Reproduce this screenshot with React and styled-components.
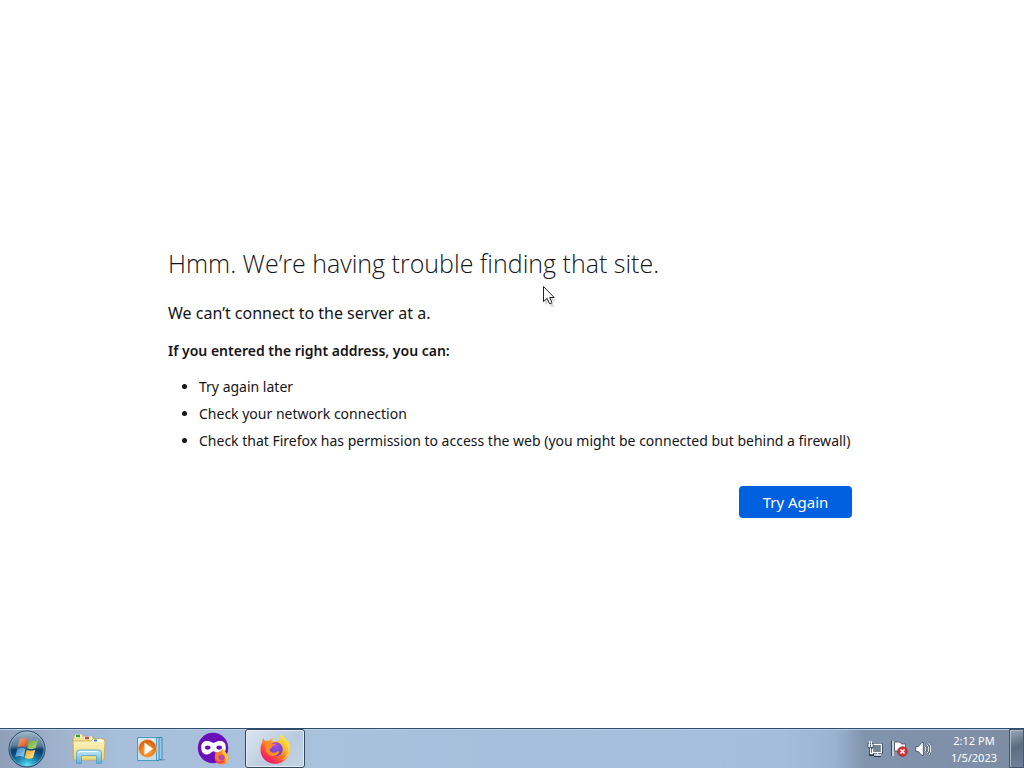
import React from 'react'
import styled, { createGlobalStyle } from 'styled-components'

const App = () => (
  <Desktop>
    <GlobalStyle />
    <Page>
      <Message>
        <Title>Hmm. We’re having trouble finding that site.</Title>
        <Lead>We can’t connect to the server at a.</Lead>
        <Hint>If you entered the right address, you can:</Hint>
        <Tips>
          <li>Try again later</li>
          <li>Check your network connection</li>
          <li>Check that Firefox has permission to access the web (you might be connected but behind a firewall)</li>
        </Tips>
        <Actions>
          <PrimaryButton type="button">Try Again</PrimaryButton>
        </Actions>
      </Message>
    </Page>
    <Taskbar>
      <StartButton type="button" aria-label="Start"><StartIcon /></StartButton>
      <Tasks>
        <TaskButton type="button" aria-label="File Explorer"><ExplorerIcon /></TaskButton>
        <TaskButton type="button" aria-label="Media Player"><PlayerIcon /></TaskButton>
        <TaskButton type="button" aria-label="Firefox Private Browsing"><PrivateIcon /></TaskButton>
        <TaskButton type="button" aria-label="Firefox" $active><FirefoxIcon /></TaskButton>
      </Tasks>
      <Tray>
        <TrayButton type="button" aria-label="Network"><NetworkIcon /></TrayButton>
        <TrayButton type="button" aria-label="Action Center"><FlagIcon /></TrayButton>
        <TrayButton type="button" aria-label="Volume"><VolumeIcon /></TrayButton>
        <Clock>
          <span>2:12 PM</span>
          <span>1/5/2023</span>
        </Clock>
        <ShowDesktop type="button" aria-label="Show desktop" />
      </Tray>
    </Taskbar>
    <Pointer viewBox="0 0 14 22" width="14" height="22" aria-hidden="true">
      <path d="M3 4v16l4-3 2 5h3l-2-6h4z" fill="#000" opacity=".15" />
      <path d="M1.5 1.5v15.2l3.6-3.4 2.5 5.5 2.4-1.1-2.4-5.2h4.6z" fill="#fff" stroke="#222" strokeLinejoin="round" />
    </Pointer>
  </Desktop>
)

export default App

const StartIcon = () => (
  <svg width="38" height="38" viewBox="0 0 38 38">
    <defs>
      <linearGradient id="orb" x1="0" y1="0" x2="0" y2="1">
        <stop offset="0" stopColor="#a3b4c4" />
        <stop offset=".4" stopColor="#5f7f9b" />
        <stop offset=".52" stopColor="#0d3d69" />
        <stop offset="1" stopColor="#0a6ea0" />
      </linearGradient>
      <radialGradient id="orbGlow" cx=".5" cy="1" r=".55">
        <stop offset="0" stopColor="#5ff0fa" />
        <stop offset="1" stopColor="#1a8cc0" stopOpacity="0" />
      </radialGradient>
      <linearGradient id="paneRed" x1="0" y1="0" x2="1" y2="1">
        <stop offset="0" stopColor="#f8b27a" />
        <stop offset="1" stopColor="#d83c18" />
      </linearGradient>
      <linearGradient id="paneGreen" x1="0" y1="0" x2="1" y2="1">
        <stop offset="0" stopColor="#6fab3c" />
        <stop offset="1" stopColor="#b4d67c" />
      </linearGradient>
      <linearGradient id="paneBlue" x1="0" y1="0" x2="1" y2="1">
        <stop offset="0" stopColor="#2d7ec4" />
        <stop offset="1" stopColor="#9cd4f2" />
      </linearGradient>
      <linearGradient id="paneYellow" x1="0" y1="0" x2="1" y2="1">
        <stop offset="0" stopColor="#f09c1c" />
        <stop offset="1" stopColor="#fff0a0" />
      </linearGradient>
    </defs>
    <circle cx="19" cy="19" r="18" fill="url(#orb)" stroke="#26486a" />
    <circle cx="19" cy="19" r="17" fill="url(#orbGlow)" stroke="#a8cfe2" strokeOpacity=".7" strokeWidth=".8" />
    <path d="M12 9c3-1.600 5.700-1.400 8.100.2l-2.200 8.300c-2.400-1.600-5.100-1.700-8.200-.1z" fill="url(#paneRed)" />
    <path d="M21.300 9.900c2.700 1.600 5.400 1.600 8.600 0l-2.200 8.200c-3 1.500-5.700 1.400-8.500-.2z" fill="url(#paneGreen)" />
    <path d="M9.300 18.800c2.900-1.500 5.600-1.500 8.200.2l-2.100 8c-2.500-1.500-5.200-1.500-8.200 0z" fill="url(#paneBlue)" />
    <path d="M18.800 19.600c2.700 1.600 5.400 1.700 8.500.2l-2.200 8c-3 1.500-5.700 1.400-8.400-.2z" fill="url(#paneYellow)" />
  </svg>
)

const ExplorerIcon = () => (
  <svg width="34" height="32" viewBox="0 0 34 32">
    <defs>
      <linearGradient id="folder" x1="0" y1="0" x2="0" y2="1">
        <stop offset="0" stopColor="#fcf5c4" />
        <stop offset="1" stopColor="#edd97a" />
      </linearGradient>
      <linearGradient id="stand" x1="0" y1="0" x2="0" y2="1">
        <stop offset="0" stopColor="#c8ecf8" />
        <stop offset="1" stopColor="#5cacd8" />
      </linearGradient>
    </defs>
    <path d="M1 6l1-4h9l1 2h9l1 2h10v20H1z" fill="#f3df8c" stroke="#c3a650" strokeWidth=".8" />
    <path d="M3 3h7M12 5h8" stroke="#fffdf0" strokeWidth="3" />
    <path d="M4 3h4" stroke="#33a047" strokeWidth="2.500" />
    <path d="M13 5h4" stroke="#d6472d" strokeWidth="2.500" />
    <path d="M1 8h18l2-2h11l1 3-1 18H2z" fill="url(#folder)" stroke="#c9ac59" strokeWidth=".8" />
    <path d="M21 7.500h9" stroke="#fff" strokeWidth="2.500" />
    <path d="M22 7.500h3" stroke="#3d88c4" strokeWidth="2" />
    <path d="M4.500 30.500V20q0-3 3-3h19q3 0 3 3v10.500h-5v-7q0-1-1-1h-13q-1 0-1 1v7z" fill="url(#stand)" stroke="#4f9fc7" strokeWidth=".8" />
    <path d="M6.500 19.500q1-1 2-1h17" fill="none" stroke="#effcff" />
  </svg>
)

const PlayerIcon = () => (
  <svg width="32" height="32" viewBox="0 0 32 32">
    <defs>
      <radialGradient id="disc" cx=".5" cy=".65" r=".6">
        <stop offset="0" stopColor="#ffb554" />
        <stop offset=".6" stopColor="#ee7b1c" />
        <stop offset="1" stopColor="#cf5b12" />
      </radialGradient>
    </defs>
    <path d="M24 27l6-1 1 1-5 1z" fill="#61788f" opacity=".5" />
    <path d="M9 4.500h18v22H9z" fill="#9fcbe3" stroke="#3889b5" />
    <path d="M7 4.500h17v23H7z" fill="#b9dced" stroke="#3889b5" />
    <path d="M2.500 4.500h19v23h-19z" fill="#bfdfee" stroke="#4b9bc2" />
    <path d="M3.500 5.500h17v8q-8-1-17 6z" fill="#e3f3f9" opacity=".7" />
    <circle cx="12.500" cy="15.500" r="9" fill="url(#disc)" stroke="#f6c28c" strokeWidth=".7" />
    <path d="M9.500 9.500v12.500l8.500-6.200z" fill="#fff" />
  </svg>
)

const PrivateIcon = () => (
  <svg width="32" height="34" viewBox="0 0 32 34">
    <circle cx="16" cy="16" r="15.200" fill="#6a12b8" />
    <path d="M4.200 15.500c0-4.600 2.500-6.400 6-6.400 3.300 0 4.800 1.900 6.300 1.900s3-1.900 6.300-1.900c3.500 0 6 1.800 6 6.400 0 4.400-2.400 7-5.700 7-3.400 0-4.900-3.200-6.600-3.200s-3.200 3.200-6.600 3.200c-3.300 0-5.700-2.600-5.700-7z" fill="#fff" />
    <ellipse cx="10.700" cy="15.600" rx="2.800" ry="2.100" fill="#6a12b8" />
    <ellipse cx="22.200" cy="15.600" rx="2.800" ry="2.100" fill="#6a12b8" />
    <path d="M18.500 19.500l2.200 1c1-.8 2-1.200 3-1.200l1.500-2.300c2.800 1.300 3.300 3 3.800 4.100 1.700 1.200 2.500 3 2.500 4.700 0 4-2.700 6.700-6.700 6.700s-7-2.700-7-6.700c0-2.200.7-4 .7-6.300z" fill="#ff7a28" />
    <path d="M25 17c2.800 1.300 3.300 3 3.800 4.100 1.700 1.200 2.500 3 2.500 4.700 0 2.300-1 4-2.800 5.200.8-5-.5-8-3.200-9.500z" fill="#ffcb3d" />
    <path d="M18 26c1.500 3.700 5.300 4.300 9.500 2-1 4-9 6-9.500-2z" fill="#f43c58" />
    <circle cx="24.500" cy="25.600" r="2.900" fill="#b04ac0" />
  </svg>
)

const FirefoxIcon = () => (
  <svg width="32" height="32" viewBox="0 0 32 32">
    <defs>
      <linearGradient id="fox" x1=".85" y1=".1" x2=".2" y2="1">
        <stop offset="0" stopColor="#fff04a" />
        <stop offset=".3" stopColor="#ffb52a" />
        <stop offset=".58" stopColor="#ff682f" />
        <stop offset=".82" stopColor="#f62b56" />
        <stop offset="1" stopColor="#dc178a" />
      </linearGradient>
      <radialGradient id="globe" cx=".5" cy=".25" r=".8">
        <stop offset="0" stopColor="#a44bf0" />
        <stop offset="1" stopColor="#5548bd" />
      </radialGradient>
    </defs>
    <path d="M4.500 5c.4 1.500 1 2.500 2.100 3.200 1.200-.4 2.400-.5 3.500-.2 1-1.700 2.300-2.700 4.300-3.200-1 1.300-1.300 2.700-.7 4 2 .2 4.500-1.200 7.500-1.200-.8-3 .2-5.400 1-7.200.8 3 4.300 5 6.200 8 .3-.7.200-1.400-.1-2 2 3 2.700 6.500 2.500 9.900-.3 8.300-6.300 14.500-14.300 14.500C8 31 1.500 24.800 1.500 16.700c0-3 .4-5.200 1.900-7.500C3.200 7.600 3.400 6.100 4.500 5z" fill="url(#fox)" />
    <circle cx="16.700" cy="16.200" r="7" fill="url(#globe)" />
    <path d="M5 9.500c3-1.900 6-1.300 8 .9l3.800.6c.2 1.200-2.900 1.700-3.400 2.300-.3 1.700-1.500 2.200-2.900 3.200 1.200 4 5.300 3.700 7 2.200 1.800-1 3.200-.3 2.800.8-1.400 2.300-3.700 3.900-6.500 3.500C9 22.500 6 19 6.500 15z" fill="#ff8a27" />
    <path d="M22.200 1c-1 5.500 5.200 7.500 6.200 14 .8 6-2.300 10.500-6.600 12.500 7.500-1.500 11-8.800 8.800-15.500C29.300 7.500 22.800 5 22.200 1z" fill="#ffe33c" opacity=".65" />
  </svg>
)

const NetworkIcon = () => (
  <svg width="16" height="16" viewBox="0 0 16 16">
    <path d="M5 3.500h10v8H5z" fill="#718297" stroke="#26364a" strokeWidth="2" />
    <path d="M7 14.500h7M10.500 11v3M3.500 7v6.500H7" fill="none" stroke="#26364a" strokeWidth="3" />
    <path d="M6 3.500h8.500v8H5.500v-4" fill="none" stroke="#fff" strokeWidth="1.300" />
    <path d="M7 14h7M10.500 12v2M3.500 7v5.500H6" fill="none" stroke="#fff" strokeWidth="1.300" />
    <path d="M1 2.500h5v4H1z" fill="#fff" stroke="#26364a" strokeWidth=".7" />
    <path d="M2.500 0v3M4.500 0v3" stroke="#fff" />
    <path d="M3.500 3.500v2" stroke="#26364a" />
  </svg>
)

const FlagIcon = () => (
  <svg width="17" height="17" viewBox="0 0 17 17">
    <path d="M1.500 1v15" stroke="#39475a" strokeWidth="3" />
    <path d="M3.500 2h5.500l1.500 2h4v7H3.500z" fill="#fff" stroke="#39475a" strokeWidth=".8" />
    <path d="M2 1v15" stroke="#fff" strokeWidth="1.500" />
    <circle cx="11.500" cy="11.500" r="4.800" fill="#d5323a" stroke="#9f1c25" strokeWidth=".7" />
    <path d="M9.500 9.500l4 4M13.500 9.500l-4 4" stroke="#fff" strokeWidth="1.600" />
  </svg>
)

const VolumeIcon = () => (
  <svg width="16" height="16" viewBox="0 0 16 16">
    <path d="M.8 5.500h2.500L7 1.500h1.300v13H7l-3.700-4H.8z" fill="#fff" stroke="#39475a" strokeWidth=".8" />
    <path d="M10 5.500q2 2.500 0 5M12 3.500q3.500 4.500 0 9M13.800 1.800q4 6.200 0 12.400" fill="none" stroke="#39475a" strokeWidth="1.800" />
    <path d="M10 5.500q2 2.500 0 5M12 3.500q3.500 4.500 0 9M13.800 1.800q4 6.200 0 12.400" fill="none" stroke="#fff" strokeWidth="1" />
  </svg>
)

const GlobalStyle = createGlobalStyle`
  * {
    box-sizing: border-box;
  }

  body {
    margin: 0;
    background: #fff;
    color: #15141a;
    font-family: 'Segoe UI', 'Noto Sans', sans-serif;
    font-size: 14px;
  }

  button {
    padding: 0;
    border: 0;
    background: none;
    font: inherit;
  }

  svg {
    display: block;
  }
`

const Desktop = styled.div`
  display: flex;
  flex-direction: column;
  min-height: 100vh;
`

const Page = styled.main`
  display: flex;
  flex: 1;
  align-items: center;
  justify-content: center;
  padding: 24px;
  padding-top: 58px;
`

const Message = styled.section`
  width: 100%;
  max-width: 688px;
`

const Title = styled.h1`
  margin: 0 0 20px;
  font-family: 'Segoe UI', 'Open Sans', sans-serif;
  font-size: 25px;
  font-weight: 300;
  line-height: 36px;
`

const Lead = styled.p`
  margin: 0 0 12px;
  font-size: 16px;
  line-height: 24px;
`

const Hint = styled.p`
  margin: 0 0 8px;
  font-weight: 600;
  line-height: 28px;
`

const Tips = styled.ul`
  margin: 0 0 32px;
  padding-left: 31px;
  line-height: 27px;
`

const Actions = styled.div`
  display: flex;
  justify-content: flex-end;
  padding-right: 4px;
`

const PrimaryButton = styled.button`
  min-width: 113px;
  height: 32px;
  border-radius: 4px;
  background: #0061e0;
  color: #fbfbfe;
  font-size: 15px;
`

const Taskbar = styled.footer`
  display: flex;
  height: 40px;
  border-top: 1px solid #2d4d70;
  background: linear-gradient(to right, #8f9fb9 0, #9fb3cf 60px, #a7bfdb 120px, #a9c1dd 260px, #a4bdda calc(100% - 240px), #9bb3d1 calc(100% - 190px), #8194ae calc(100% - 160px), #7d8ca3 100%);
  box-shadow: inset 0 1px 0 #c0d0e3;
`

const StartButton = styled.button`
  display: grid;
  place-items: center;
  width: 54px;
`

const Tasks = styled.nav`
  display: flex;
  flex: 1;
  gap: 2px;
  padding-left: 5px;
`

const TaskButton = styled.button`
  display: grid;
  place-items: center;
  width: 60px;
  border: 1px solid ${ props => props.$active ? '#35475c' : 'transparent' };
  border-radius: 3px;
  background: ${ props => props.$active ? 'linear-gradient(135deg, #dce5ef, #b8cadd 60%, #c4d5e7)' : 'none' };
  box-shadow: ${ props => props.$active ? 'inset 0 0 0 1px #e3ecf5' : 'none' };
`

const Tray = styled.div`
  display: flex;
  align-items: stretch;
`

const TrayButton = styled.button`
  display: grid;
  place-items: center;
  width: 24px;
`

const Clock = styled.time`
  display: flex;
  flex-direction: column;
  justify-content: center;
  width: 74px;
  padding-left: 4px;
  color: #fff;
  font-size: 11px;
  line-height: 17px;
  text-align: center;
`

const ShowDesktop = styled.button`
  width: 15px;
  border: 1px solid #46566c;
  background: linear-gradient(160deg, #9aa7b7, #5d6c80 45%, #718198);
  box-shadow: inset 1px 1px 0 #aebac8;
`

const Pointer = styled.svg`
  position: absolute;
  top: 285px;
  left: 542px;
  pointer-events: none;
`
